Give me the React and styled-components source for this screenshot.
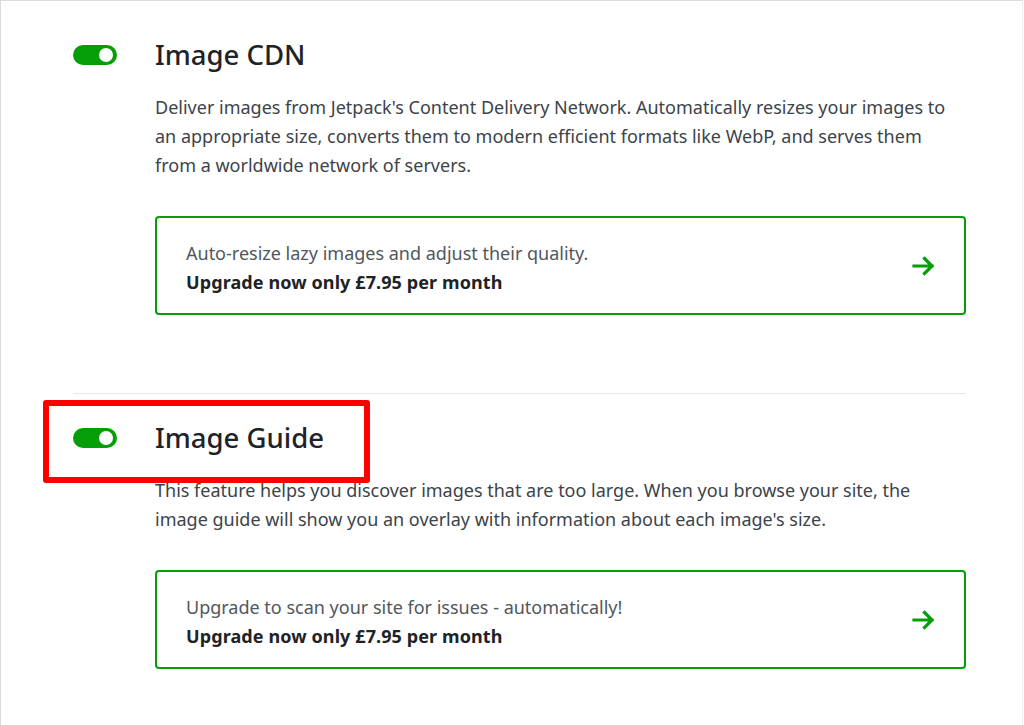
import React from "react";
import styled, { createGlobalStyle } from "styled-components";

const Global = createGlobalStyle`
  html, body { margin: 0; padding: 0; background: #fff; }
  body { font-family: "Noto Sans", "Open Sans", sans-serif; -webkit-font-smoothing: antialiased; }
  * { box-sizing: border-box; }
`;

const Frame = styled.div`
  width: 1023px;
  min-height: 725px;
  border-top: 1px solid #dcdcde;
  border-left: 1px solid #dcdcde;
  border-right: 1px solid #f0f0f0;
  padding: 36px 56px 40px 72px;
`;

const Section = styled.section`
  padding-top: ${(p) => (p.$first ? "0" : "26px")};
  border-top: ${(p) => (p.$first ? "none" : "1px solid #e6e6e6")};
  margin-bottom: ${(p) => (p.$first ? "78px" : "0")};
`;

const Header = styled.div`
  position: relative;
  display: grid;
  grid-template-columns: 44px 1fr;
  column-gap: 38px;
  align-items: center;
  height: 36px;
`;

const Toggle = styled.span`
  position: relative;
  display: block;
  width: 44px;
  height: 20px;
  border-radius: 10px;
  background: #069e08;
  &::after {
    content: "";
    position: absolute;
    right: 4px;
    top: 3px;
    width: 14px;
    height: 14px;
    border-radius: 50%;
    background: #fff;
  }
`;

const Title = styled.h2`
  margin: 0;
  font-size: 27.5px;
  line-height: 36px;
  font-weight: 500;
  color: #1d2327;
`;

const Highlight = styled.span`
  position: absolute;
  left: -30px;
  top: -20px;
  width: 327px;
  height: 83px;
  border: 6px solid #ff0000;
  border-radius: 3px;
  pointer-events: none;
`;

const Body = styled.div`
  margin-left: 82px;
  width: 811px;
`;

const Description = styled.p`
  margin: 20px 0 36px;
  font-size: 18px;
  line-height: 29px;
  color: #3c434a;
`;

const Card = styled.a`
  display: flex;
  align-items: center;
  justify-content: space-between;
  height: 99px;
  padding: 0 28px 0 29px;
  border: 2px solid #069e08;
  border-radius: 4px;
  text-decoration: none;
  color: #2c3338;
`;

const CardText = styled.div`
  font-size: 18px;
  line-height: 29px;
  padding-top: 5px;
`;

const Pitch = styled.div`
  color: #50575e;
`;

const Price = styled.div`
  font-weight: 700;
  color: #1d2327;
  letter-spacing: 0.1px;
`;

const Arrow = () => (
  <svg width="24" height="22" viewBox="0 0 24 22" fill="none">
    <path d="M2 11h18M12.5 3.5 20 11l-7.5 7.5" stroke="#069e08" strokeWidth="3.2" strokeLinecap="square" />
  </svg>
);

const features = [
  {
    title: "Image CDN",
    desc: "Deliver images from Jetpack's Content Delivery Network. Automatically resizes your images to an appropriate size, converts them to modern efficient formats like WebP, and serves them from a worldwide network of servers.",
    pitch: "Auto-resize lazy images and adjust their quality.",
  },
  {
    title: "Image Guide",
    desc: "This feature helps you discover images that are too large. When you browse your site, the image guide will show you an overlay with information about each image's size.",
    pitch: "Upgrade to scan your site for issues - automatically!",
    highlight: true,
  },
];

export default function App() {
  return (
    <>
      <Global />
      <Frame>
        {features.map((f, i) => (
          <Section key={f.title} $first={i === 0}>
            <Header>
              <Toggle />
              <Title>{f.title}</Title>
              {f.highlight && <Highlight />}
            </Header>
            <Body>
              <Description>{f.desc}</Description>
              <Card href="#">
                <CardText>
                  <Pitch>{f.pitch}</Pitch>
                  <Price>Upgrade now only £7.95 per month</Price>
                </CardText>
                <Arrow />
              </Card>
            </Body>
          </Section>
        ))}
      </Frame>
    </>
  );
}
